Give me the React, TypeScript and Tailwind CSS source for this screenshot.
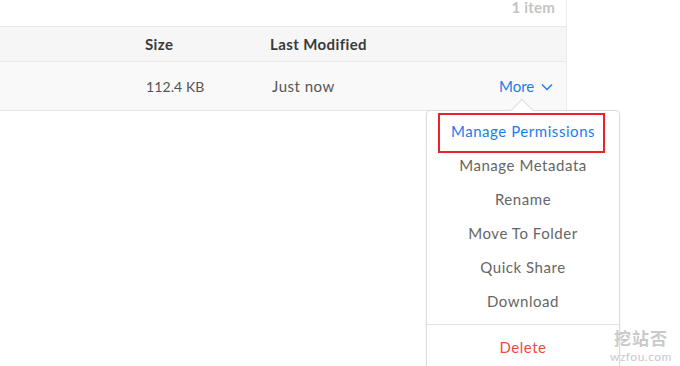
import React from "react";

const menuItems = ["Manage Metadata", "Rename", "Move To Folder", "Quick Share", "Download"];

function Chevron() {
  return (
    <svg width="12" height="8" viewBox="0 0 12 8" className="ml-[7px] mt-[1px]">
      <path d="M1 1.5 L6 6.5 L11 1.5" fill="none" stroke="#1a7cf0" strokeWidth="1.4" />
    </svg>
  );
}

export default function App() {
  return (
    <div
      className="relative w-[680px] h-[366px] overflow-hidden bg-white"
      style={{ fontFamily: "Lato, 'Noto Sans', sans-serif" }}
    >
      <div className="w-[567px] border-r border-[#ececec]">
        <div className="h-[26px] flex justify-end items-start pr-[11px]">
          <span className="text-[15px] font-bold text-[#c4c4c4] leading-[15px] tracking-[0.2px]">1 item</span>
        </div>
        <div className="h-[36px] flex items-center bg-[#f6f6f6] border-t border-b border-[#e9e9e9] text-[15px] font-bold text-[#3a3a3a] tracking-[0.4px]">
          <span className="ml-[145px] w-[125px]">Size</span>
          <span>Last Modified</span>
        </div>
        <div className="h-[49px] flex items-center bg-[#f9f9f9] border-b border-[#e6e6e6] text-[15px] text-[#555]">
          <span className="ml-[146px] w-[126px] text-[14px] tracking-[0.1px]">112.4 KB</span>
          <span className="w-[227px] tracking-[0.5px]">Just now</span>
          <span className="flex items-center text-[#1a7cf0]">
            More
            <Chevron />
          </span>
        </div>
      </div>

      <div className="absolute left-[426px] top-[110px] w-[194px] h-[280px] bg-white border border-[#dcdcdc] rounded-[4px] shadow-[0_1px_3px_rgba(0,0,0,0.06)]">
        <div className="absolute left-[87px] top-[-9px] w-[16px] h-[16px] rotate-45 bg-white border-l border-t border-[#dcdcdc]" />
        <div className="relative pt-[3px] text-[15px] text-[#666] text-center tracking-[0.55px]">
          <div className="h-[34px] flex items-center justify-center text-[#1a7cf0]">Manage Permissions</div>
          {menuItems.map((m) => (
            <div key={m} className="h-[34px] flex items-center justify-center">
              {m}
            </div>
          ))}
          <div className="mt-[6px] border-t border-[#e2e2e2]" />
          <div className="mt-[5px] h-[34px] flex items-center justify-center text-[#f04a3c]">Delete</div>
          <div className="absolute left-[11px] top-[2px] w-[167px] h-[40px] border-2 border-[#e8232b]" />
        </div>
      </div>

      <div className="absolute left-[610px] top-[329px] flex flex-col items-center gap-[4px] text-[#c9c9c9]">
        <span
          className="block h-[17px] text-[17px] leading-[17px] font-bold tracking-[1px]"
          style={{ fontFamily: "'Noto Sans CJK SC', sans-serif" }}
        >
          挖站否
        </span>
        <span className="block h-[13px] text-[12px] leading-[13px] tracking-[0.5px]">wzfou.com</span>
      </div>
    </div>
  );
}
